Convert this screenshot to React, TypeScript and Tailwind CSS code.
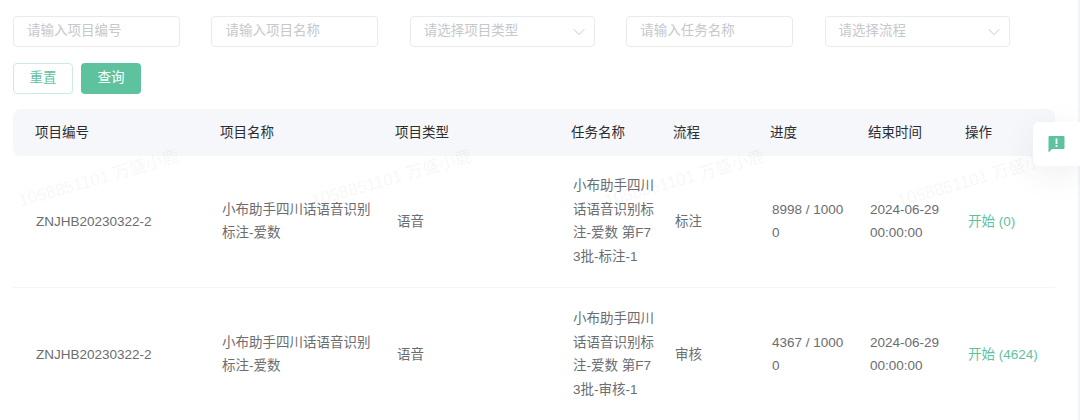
import { ChevronDown } from "lucide-react";

const font = "font-['Liberation_Sans','Noto_Sans_CJK_SC',sans-serif]";

const columns = "grid grid-cols-[185px_175px_176px_102px_97px_98px_97px_112px]";

const rows = [
  {
    no: "ZNJHB20230322-2",
    name: "小布助手四川话语音识别标注-爱数",
    type: "语音",
    task: "小布助手四川话语音识别标注-爱数 第F73批-标注-1",
    flow: "标注",
    progress: "8998 / 10000",
    action: "开始 (0)",
  },
  {
    no: "ZNJHB20230322-2",
    name: "小布助手四川话语音识别标注-爱数",
    type: "语音",
    task: "小布助手四川话语音识别标注-爱数 第F73批-审核-1",
    flow: "审核",
    progress: "4367 / 10000",
    action: "开始 (4624)",
  },
];

function Field({ width, text, select }: { width: string; text: string; select?: boolean }) {
  return (
    <div className={`${width} h-[31px] flex items-center justify-between pl-[13px] pr-[5px] rounded-[4px] border border-[#e9eaec] bg-white`}>
      <span className="text-[13.5px] text-[#c6c8cc]">{text}</span>
      {select && <ChevronDown size={20} strokeWidth={0.9} className="text-[#b4b6ba]" />}
    </div>
  );
}

function Watermark({ className }: { className: string }) {
  return (
    <span className={`absolute top-[170px] text-[17px] leading-[18px] whitespace-nowrap text-black/[0.05] -rotate-[16deg] pointer-events-none ${className}`}>
      1058851101 万盛小鹿
    </span>
  );
}

export default function App() {
  return (
    <div className={`relative w-[1080px] h-[420px] overflow-hidden bg-white ${font}`}>
      <div className="pl-[13px] pt-[16px] w-[1055px]">
        <div className="flex gap-[31.4px]">
          <Field width="w-[167px]" text="请输入项目编号" />
          <Field width="w-[167px]" text="请输入项目名称" />
          <Field width="w-[185px]" text="请选择项目类型" select />
          <Field width="w-[167px]" text="请输入任务名称" />
          <Field width="w-[185px]" text="请选择流程" select />
        </div>

        <div className="flex gap-[8px] mt-[15.5px]">
          <button className="w-[60px] h-[31px] rounded-[4px] border border-[#c9eee0] bg-white text-[13.5px] text-[#5fc29f]">重置</button>
          <button className="w-[60px] h-[31px] rounded-[4px] bg-[#5fc29f] text-[13.5px] text-white">查询</button>
        </div>

        <div className={`${columns} mt-[15.5px] h-[46.5px] pt-[1px] items-center rounded-[8px] bg-[#f6f7fb] text-[13.5px] text-[#2b2d31]`}>
          <span className="pl-[22px]">项目编号</span>
          <span className="pl-[22px]">项目名称</span>
          <span className="pl-[22px]">项目类型</span>
          <span className="pl-[22px]">任务名称</span>
          <span className="pl-[22px]">流程</span>
          <span className="pl-[22px]">进度</span>
          <span className="pl-[22px]">结束时间</span>
          <span className="pl-[22px]">操作</span>
        </div>

        {rows.map((row, i) => (
          <div key={i} className={`${columns} h-[132.5px] items-center border-b border-[#f5f5f6] last:border-b-0 text-[13.5px] leading-[23.4px] text-[#6b6d71]`}>
            <span className="pl-[23px]">{row.no}</span>
            <span className="pl-[24px] pr-[2px]">{row.name}</span>
            <span className="pl-[24px]">{row.type}</span>
            <span className="pl-[24px] w-[107px] break-all">{row.task}</span>
            <span className="pl-[24px]">{row.flow}</span>
            <span className="pl-[24px] break-all">{row.progress}</span>
            <span className="pl-[24px] pr-[2px]">2024-06-29 00:00:00</span>
            <span className="pl-[25px] text-[#5fc29f]">{row.action}</span>
          </div>
        ))}
      </div>

      <Watermark className="left-[16px]" />
      <Watermark className="left-[309px]" />
      <Watermark className="left-[602px]" />
      <Watermark className="left-[895px]" />

      {/* scrollbar edge */}
      <div className="absolute right-0 top-0 bottom-0 w-[2px] bg-[#f3f4f8]" />

      <div className="absolute right-0 top-[122px] w-[47px] h-[44px] flex items-center justify-center rounded-l-[6px] bg-white shadow-[0_8px_32px_rgba(40,50,70,0.08)]">
        <svg width="17" height="18" viewBox="0 0 17 18">
          <path d="M1.5 1h14a1 1 0 0 1 1 1v11a1 1 0 0 1-1 1H4l-3.5 3.5V2a1 1 0 0 1 1-1z" fill="#5fc29f" />
          <rect x="7.6" y="3.5" width="1.8" height="5.5" fill="#fff" />
          <rect x="7.6" y="10" width="1.8" height="1.8" fill="#fff" />
        </svg>
      </div>
    </div>
  );
}
